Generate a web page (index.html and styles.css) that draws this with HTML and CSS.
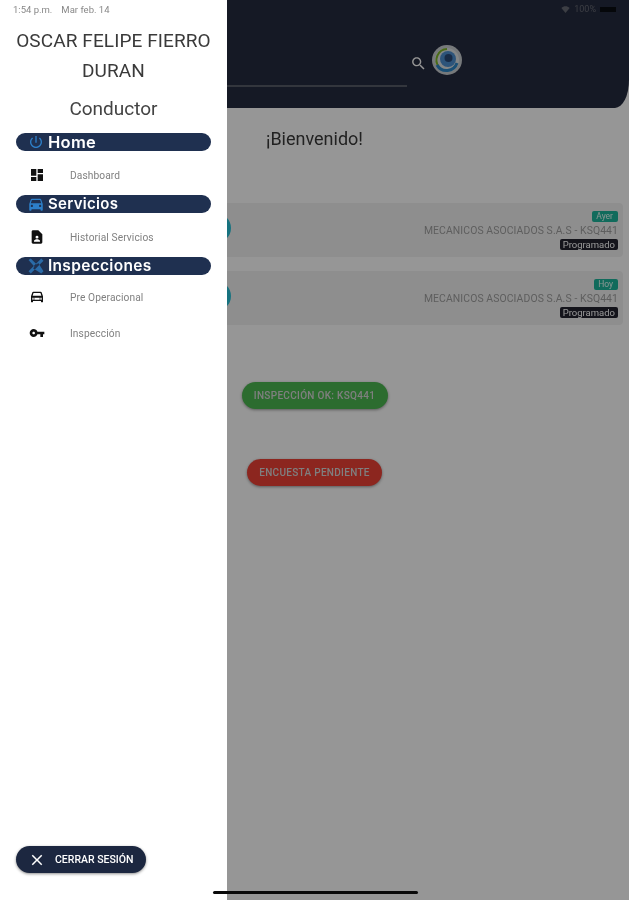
FILE: index.html
```html
<!DOCTYPE html>
<html lang="es">
<head>
<meta charset="utf-8">
<title>Conductor</title>
<link rel="stylesheet" href="styles.css">
</head>
<body>
<div class="app">
  <main class="main">
    <header class="header">
      <div class="status-right">
        <svg class="wifi" viewBox="0 0 24 24"><path d="M12 21 1 8c6-6 16-6 22 0z"/></svg>
        <span>100%</span>
        <span class="battery"></span>
      </div>
      <div class="search-row">
        <div class="search-line"></div>
        <svg class="search-icon" viewBox="0 0 24 24"><path d="M15.5 14h-.79l-.28-.27C15.41 12.59 16 11.11 16 9.5 16 5.91 13.09 3 9.5 3S3 5.91 3 9.5 5.91 16 9.5 16c1.61 0 3.09-.59 4.23-1.57l.27.28v.79l5 4.99L20.49 19l-4.99-5zm-6 0C7.01 14 5 11.99 5 9.5S7.01 5 9.5 5 14 7.01 14 9.5 11.99 14 9.5 14z"/></svg>
        <svg class="logo" viewBox="0 0 30 30">
          <circle cx="15" cy="15" r="15" fill="#c9ced2"/>
          <circle cx="15" cy="15" r="12" fill="#dfe4e6"/>
          <path d="M15 4a11 11 0 0 0-8 18" fill="none" stroke="#7fb62a" stroke-width="2"/>
          <path d="M5 20a11 11 0 0 0 20-2" fill="none" stroke="#2d86c8" stroke-width="3"/>
          <circle cx="16" cy="14" r="8" fill="#4d8fd0"/>
          <circle cx="16.500" cy="13" r="4" fill="#2a4a78"/>
        </svg>
      </div>
    </header>
    <h1 class="welcome">¡Bienvenido!</h1>
    <section class="cards">
      <article class="card">
        <span class="dot"></span>
        <div class="card-info">
          <span class="tag">Ayer</span>
          <span class="company">MECANICOS ASOCIADOS S.A.S - KSQ441</span>
          <span class="state">Programado</span>
        </div>
      </article>
      <article class="card">
        <span class="dot"></span>
        <div class="card-info">
          <span class="tag">Hoy</span>
          <span class="company">MECANICOS ASOCIADOS S.A.S - KSQ441</span>
          <span class="state">Programado</span>
        </div>
      </article>
    </section>
    <div class="actions">
      <button class="action green">INSPECCIÓN OK: KSQ441</button>
      <button class="action red">ENCUESTA PENDIENTE</button>
    </div>
  </main>

  <div class="scrim"></div>

  <aside class="drawer">
    <div class="status-left"><span>1:54 p.m.</span><span>Mar feb. 14</span></div>
    <div class="user-name">OSCAR FELIPE FIERRO DURAN</div>
    <div class="user-role">Conductor</div>

    <div class="pill home">
      <svg class="pill-icon small" viewBox="0 0 24 24"><path d="M13 3h-2v10h2V3zm4.83 2.17l-1.42 1.42C17.99 7.86 19 9.81 19 12c0 3.87-3.13 7-7 7s-7-3.13-7-7c0-2.19 1.01-4.14 2.58-5.42L6.17 5.17C4.23 6.82 3 9.26 3 12c0 4.97 4.03 9 9 9s9-4.03 9-9c0-2.74-1.23-5.18-3.17-6.83z"/></svg>
      <span>Home</span>
    </div>
    <a class="item">
      <svg viewBox="0 0 24 24"><path d="M3 13h8V3H3v10zm0 8h8v-6H3v6zm10 0h8V11h-8v10zm0-18v6h8V3h-8z"/></svg>
      <span>Dashboard</span>
    </a>

    <div class="pill">
      <svg class="pill-icon" viewBox="0 0 24 24"><path d="M18.92 6.01C18.72 5.42 18.16 5 17.5 5h-11c-.66 0-1.21.42-1.42 1.01L3 12v8c0 .55.45 1 1 1h1c.55 0 1-.45 1-1v-1h12v1c0 .55.45 1 1 1h1c.55 0 1-.45 1-1v-8l-2.08-5.99zM6.5 16c-.83 0-1.5-.67-1.5-1.5S5.67 13 6.5 13s1.5.67 1.5 1.5S7.33 16 6.5 16zm11 0c-.83 0-1.5-.67-1.5-1.5s.67-1.5 1.5-1.5 1.5.67 1.5 1.5-.67 1.5-1.5 1.5zM5 11l1.5-4.5h11L19 11H5z"/></svg>
      <span>Servicios</span>
    </div>
    <a class="item">
      <svg viewBox="0 0 24 24"><path d="M14 2H6c-1.1 0-2 .9-2 2v16c0 1.1.9 2 2 2h12c1.1 0 2-.9 2-2V8l-6-6zm-2 8a2.2 2.2 0 1 1 0 4.4 2.2 2.2 0 0 1 0-4.400zm4.500 9h-9v-1.200c0-1.800 3-2.600 4.500-2.600s4.500.8 4.500 2.600z"/></svg>
      <span>Historial Servicios</span>
    </a>

    <div class="pill wide">
      <svg class="pill-icon dim" viewBox="0 0 24 24"><path d="M2 4l3-2 8 8 2-2 7 11-3 3-11-7 2-2zM22 5l-3-3-17 17 3 3z"/></svg>
      <span>Inspecciones</span>
    </div>
    <a class="item">
      <svg viewBox="0 0 24 24"><path d="M18.92 5.010C18.72 4.420 18.160 4 17.500 4h-11c-.66 0-1.210.42-1.420 1.010L3 11v8c0 .55.45 1 1 1h1c.55 0 1-.45 1-1v-1h12v1c0 .55.45 1 1 1h1c.55 0 1-.45 1-1v-8zM7 16H5v-3h2zm12 0h-2v-3h2zM5.500 10l1.300-4h10.400l1.300 4z M8 13h8v3H8z"/></svg>
      <span>Pre Operacional</span>
    </a>
    <a class="item">
      <svg viewBox="0 0 24 24"><path d="M12.65 10C11.83 7.67 9.61 6 7 6c-3.31 0-6 2.690-6 6s2.690 6 6 6c2.610 0 4.830-1.670 5.650-4H17v4h4v-4h2v-4H12.650zM7 14c-1.100 0-2-.9-2-2s.9-2 2-2 2 .9 2 2-.9 2-2 2z"/></svg>
      <span>Inspección</span>
    </a>

    <button class="logout">
      <svg viewBox="0 0 24 24"><path d="M19 6.410 17.590 5 12 10.590 6.410 5 5 6.410 10.590 12 5 17.590 6.410 19 12 13.410 17.590 19 19 17.590 13.410 12z"/></svg>
      <span>CERRAR SESIÓN</span>
    </button>
  </aside>

  <div class="home-bar"></div>
</div>
</body>
</html>
```

FILE: styles.css
```css
* { box-sizing: border-box; }
html, body { margin: 0; height: 100%; }
body { font-family: Roboto, "Liberation Sans", sans-serif; overflow: hidden; background: #fff; }

.app { position: relative; width: 629px; height: 900px; overflow: hidden; filter: blur(0.45px); }

.main { height: 100%; background: #ffffff; display: flex; flex-direction: column; }

.header {
  height: 108px;
  background: #252b3f;
  border-bottom-right-radius: 14px 28px;
  padding: 0 13px 0 0;
  display: flex;
  flex-direction: column;
}
.status-right { height: 18px; display: flex; align-items: center; justify-content: flex-end; gap: 4px; font-size: 9px; color: #666a74; }
.wifi { width: 9px; height: 9px; fill: #666a74; }
.battery { width: 16px; height: 5px; background: #0a0c12; }

.search-row { margin-top: 27px; display: flex; align-items: flex-start; }
.search-line { width: 407px; height: 2px; margin-top: 40px; background: #585c68; flex: none; }
.search-icon { width: 17px; height: 17px; fill: #fff; margin: 10px 0 0 3px; flex: none; }
.logo { width: 30px; height: 30px; margin-left: 5px; flex: none; }

.welcome { margin: 20px 0 0; height: 21px; font-size: 18px; line-height: 21px; font-weight: 400; color: #3a3a3a; text-align: center; }

.cards { margin-top: 54px; padding: 0 6px; display: flex; flex-direction: column; gap: 14px; }
.card {
  height: 54px;
  border-radius: 4px;
  background: #f2f2f2;
  display: flex;
  align-items: center;
  justify-content: space-between;
  padding: 0 5px 0 195px;
}
.dot { width: 30px; height: 30px; border-radius: 50%; background: #27c2d8; margin-bottom: 4px; }
.card-info { display: flex; flex-direction: column; align-items: flex-end; }
.tag { height: 11px; padding: 0 5px 0 4px; border-radius: 2px; background: #1eb69c; color: #e9fffa; font-size: 8.500px; line-height: 11px; }
.company { margin: 3px 0 2px; font-size: 10.400px; line-height: 12px; letter-spacing: 0.1px; color: #a0a0a0; }
.state { height: 11px; padding: 0 3px; border-radius: 2px; background: #22222f; color: #fff; font-size: 9.500px; line-height: 11px; }

.actions { margin-top: 57px; display: flex; flex-direction: column; align-items: center; gap: 50px; }
.action {
  height: 27px;
  border: 0;
  border-radius: 14px;
  font-family: inherit;
  font-size: 10px;
  font-weight: 500;
  letter-spacing: 0.3px;
  color: #d8d8d8;
  box-shadow: 0 1px 3px rgba(0,0,0,.4);
}
.green { width: 146px; background: #4cb851; }
.red { width: 135px; background: #ee4136; }

.scrim { position: absolute; inset: 0; background: rgba(0,0,0,.41); }

.drawer {
  position: absolute;
  left: 0; top: 0; bottom: 0;
  width: 227px;
  background: #fff;
  display: flex;
  flex-direction: column;
  padding-bottom: 27px;
}
.status-left { height: 18px; padding-left: 13px; display: flex; align-items: center; gap: 9px; font-size: 9.500px; color: #888; }
.user-name { margin-top: 8px; padding: 0 10px; font-size: 19px; line-height: 30px; letter-spacing: 0.1px; text-align: center; color: #3a3a3a; }
.user-role { margin: 8px 0 9px; font-size: 19px; line-height: 30px; text-align: center; color: #444; }

.pill {
  margin: 2px 16px 0;
  height: 18px;
  flex: none;
  border-radius: 9px;
  background: #1f3050;
  color: #fff;
  display: flex;
  align-items: center;
  gap: 3px;
  padding: 0 0 1px 11px;
  font-family: Inter, "Noto Sans", sans-serif;
  font-size: 15px;
  font-weight: 600;
  letter-spacing: 0.3px;
}
.pill.home { margin-top: 0; font-size: 16.500px; }
.pill.wide { font-size: 15.500px; }
.pill-icon { width: 18px; height: 18px; fill: #2d7fc9; flex: none; }
.pill-icon.dim { fill: #2a6ba8; }
.pill-icon.small { width: 16px; height: 16px; margin: 0 1px 0 1px; }

.item { height: 36px; flex: none; display: flex; align-items: center; gap: 25px; padding-left: 29px; font-size: 10.200px; color: #808080; letter-spacing: 0.1px; }
.pill + .item { margin-top: 6px; }
.pill.wide + .item { margin-top: 4px; }
.item svg { width: 16px; height: 16px; fill: #111; flex: none; }

.logout {
  margin: auto 0 0 16px;
  width: 130px;
  height: 27px;
  flex: none;
  border: 0;
  border-radius: 14px;
  background: #1c2740;
  color: #fff;
  display: flex;
  align-items: center;
  gap: 9px;
  padding: 0 0 0 12px;
  font-family: inherit;
  font-size: 10.500px;
  font-weight: 500;
  box-shadow: 0 1px 3px rgba(0,0,0,.45);
}
.logout svg { width: 18px; height: 18px; fill: #fff; flex: none; }

.home-bar { position: absolute; left: 213px; top: 891px; width: 205px; height: 3px; border-radius: 2px; background: #0a0a0a; }
```
